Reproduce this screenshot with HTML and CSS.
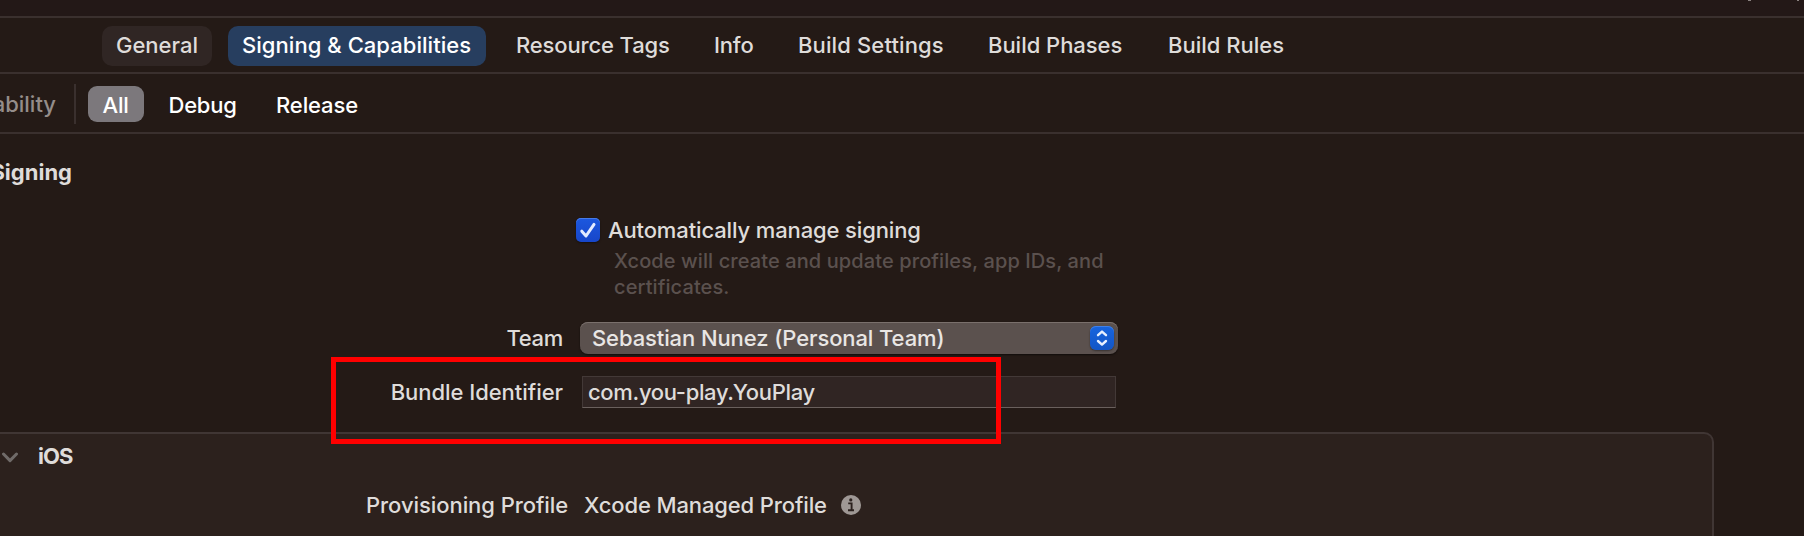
FILE: index.html
```
<!DOCTYPE html>
<html lang="en">
<head>
<meta charset="utf-8">
<title>Signing &amp; Capabilities</title>
<link rel="stylesheet" href="styles.css">
</head>
<body>
<div class="window">
  <div class="topbar"><i class="tick"></i><i class="tick small"></i></div>
  <nav class="tabs">
    <a class="tab general">General</a>
    <a class="tab signing">Signing &amp; Capabilities</a>
    <a class="tab resource">Resource Tags</a>
    <a class="tab info">Info</a>
    <a class="tab settings">Build Settings</a>
    <a class="tab phases">Build Phases</a>
    <a class="tab rules">Build Rules</a>
  </nav>
  <div class="filters">
    <div class="add"><span>Capability</span></div>
    <a class="filter all">All</a>
    <a class="filter debug">Debug</a>
    <a class="filter release">Release</a>
  </div>
  <main class="content">
    <h2 class="section-title"><span>Signing</span></h2>
    <div class="check-row">
      <span class="checkbox"><svg width="24" height="24" viewBox="0 0 24 24"><path d="M5.8 13.2 10 18 18 6.4" fill="none" stroke="#e3ebff" stroke-width="3" stroke-linecap="round" stroke-linejoin="round"/></svg></span>
      <span class="check-label">Automatically manage signing</span>
    </div>
    <p class="hint">Xcode will create and update profiles, app IDs, and<br>certificates.</p>
    <div class="row">
      <span class="label">Team</span>
      <div class="popup"><span class="popup-text">Sebastian Nunez (Personal Team)</span>
        <span class="stepper"><svg width="24" height="24" viewBox="0 0 24 24"><path d="M8 9.2 12 5.6 16 9.2M8 15 12 18.6 16 15" fill="none" stroke="#e8f0ff" stroke-width="2.4" stroke-linecap="round" stroke-linejoin="round"/></svg></span>
      </div>
    </div>
    <div class="row bundle">
      <span class="label bundle-label">Bundle Identifier</span>
      <div class="field">com.you-play.YouPlay</div>
    </div>
    <section class="card">
      <div class="card-head">
        <svg class="chevron" width="18" height="12" viewBox="0 0 18 12"><path d="M2.5 2 9 8.6 15.5 2" fill="none" stroke="#706b69" stroke-width="3" stroke-linecap="round" stroke-linejoin="round"/></svg>
        <h3 class="platform">iOS</h3>
      </div>
      <div class="profile">
        <span class="profile-label">Provisioning Profile</span>
        <span class="profile-value">Xcode Managed Profile</span>
        <svg class="info-icon" width="20" height="20" viewBox="0 0 20 20"><circle cx="10" cy="10" r="10" fill="#9f9895"/><circle cx="9.8" cy="4.9" r="1.6" fill="#2b211e"/><path d="M7.2 8.4H10.6V15M7 15.2H13" fill="none" stroke="#2b211e" stroke-width="1.9"/></svg>
      </div>
    </section>
  </main>
  <div class="highlight"></div>
</div>
</body>
</html>
```
FILE: styles.css
```
* { box-sizing: border-box; }
body {
  margin: 0;
  overflow: hidden;
  background: #241a16;
  color: #dfdcda;
  font: 450 22px/28px Inter, sans-serif;
}
h2, h3, p { margin: 0; }
svg { display: block; flex: none; }
span, a { white-space: nowrap; }
.window {
  position: relative;
  display: flex;
  flex-direction: column;
  width: 1804px;
  height: 536px;
  overflow: hidden;
}
.topbar {
  flex: none;
  display: flex;
  justify-content: flex-end;
  gap: 46px;
  height: 16px;
  padding-right: 5px;
  background: #231817;
}
.tick { width: 3px; height: 1px; background: #8b8381; }
.tick.small { width: 2px; }

.tabs {
  flex: none;
  display: flex;
  align-items: center;
  gap: 16px;
  height: 58px;
  padding: 2px 0 0 102px;
  border-top: 2px solid #3a302e;
  border-bottom: 2px solid #3a302e;
}
.tab {
  height: 40px;
  padding-left: 14px;
  border-radius: 10px;
  line-height: 38px;
}
.general { width: 110px; background: #302624; }
.signing { width: 258px; background: #273e5f; color: #fff; letter-spacing: .05px; }
.resource { width: 182px; letter-spacing: -.14px; }
.info { width: 68px; letter-spacing: -.2px; }
.settings { width: 174px; letter-spacing: .13px; }
.phases { width: 164px; letter-spacing: -.03px; }
.rules { width: 146px; }

.filters {
  flex: none;
  display: flex;
  align-items: center;
  height: 60px;
  padding-top: 2px;
  border-bottom: 2px solid #3a302e;
  color: #fff;
}
.add {
  display: flex;
  align-items: center;
  justify-content: flex-end;
  width: 76px;
  height: 40px;
  margin-right: 12px;
  padding-right: 18px;
  border-right: 2px solid #3a302e;
  color: #948d8a;
}
.filter { height: 36px; line-height: 38px; }
.all {
  width: 56px;
  padding-right: 1px;
  border-radius: 9px;
  background: #7c787c;
  text-align: center;
  letter-spacing: -.3px;
}
.debug { width: 108px; padding-left: 24.5px; letter-spacing: -.25px; }
.release { padding-left: 24px; letter-spacing: -.12px; }

.content { flex: 1; padding-top: 24px; }
.section-title {
  display: flex;
  justify-content: flex-end;
  width: 72px;
  height: 28px;
  font-size: 22px;
  font-weight: 700;
  letter-spacing: 0;
}
.check-row {
  display: flex;
  align-items: center;
  gap: 8px;
  height: 28px;
  margin: 30px 0 4px;
  padding-left: 576px;
  letter-spacing: -.13px;
}
.checkbox {
  width: 24px;
  height: 24px;
  border-radius: 5px;
  background: linear-gradient(#1c58df, #1746c9);
  box-shadow: inset 0 1px #477be8, 0 1px 2px #0006;
}
.hint {
  height: 52px;
  padding-left: 614px;
  color: #5b514e;
  font-size: 20px;
  line-height: 26px;
  letter-spacing: .1px;
}
.row {
  display: flex;
  align-items: center;
  height: 32px;
  margin-top: 22px;
}
.label { width: 563px; text-align: right; letter-spacing: -.3px; }
.bundle-label { letter-spacing: -.04px; }
.popup {
  display: flex;
  align-items: center;
  justify-content: space-between;
  width: 538px;
  height: 32px;
  margin-left: 17px;
  padding: 0 4px 0 12px;
  border-radius: 8px;
  background: #5b514e;
  box-shadow: inset 0 1px #7a706c, 0 1px 2px #0008;
  color: #e9e6e4;
  letter-spacing: -.1px;
}
.stepper {
  width: 24px;
  height: 24px;
  border-radius: 6px;
  background: linear-gradient(#1764df, #1356c6);
  box-shadow: inset 0 1px #3f80e8, 0 1px 2px #0006;
}
.field {
  width: 534px;
  height: 32px;
  margin-left: 19px;
  padding-left: 5px;
  border: 1px solid #433937;
  border-bottom-color: #6a605d;
  background: #302523;
  line-height: 30px;
  letter-spacing: -.33px;
}
.card {
  width: 1734px;
  height: 130px;
  margin: 24px 0 0 -20px;
  padding-left: 20px;
  border: 2px solid #403634;
  border-left: 0;
  border-radius: 10px;
  background: #2c211d;
}
.card-head {
  display: flex;
  align-items: center;
  height: 28px;
  margin-top: 8px;
  padding-left: 1px;
}
.chevron { position: relative; top: 2px; }
.platform {
  margin-left: 19px;
  font-size: 22px;
  font-weight: 700;
  letter-spacing: -.9px;
}
.profile {
  display: flex;
  align-items: center;
  height: 28px;
  margin-top: 21px;
  padding-left: 366px;
}
.profile-label { width: 218px; letter-spacing: -.06px; }
.profile-value { width: 257px; letter-spacing: -.12px; }
.highlight {
  position: absolute;
  left: 331px;
  top: 357px;
  width: 670px;
  height: 87px;
  border: 5px solid #f00;
}
```
